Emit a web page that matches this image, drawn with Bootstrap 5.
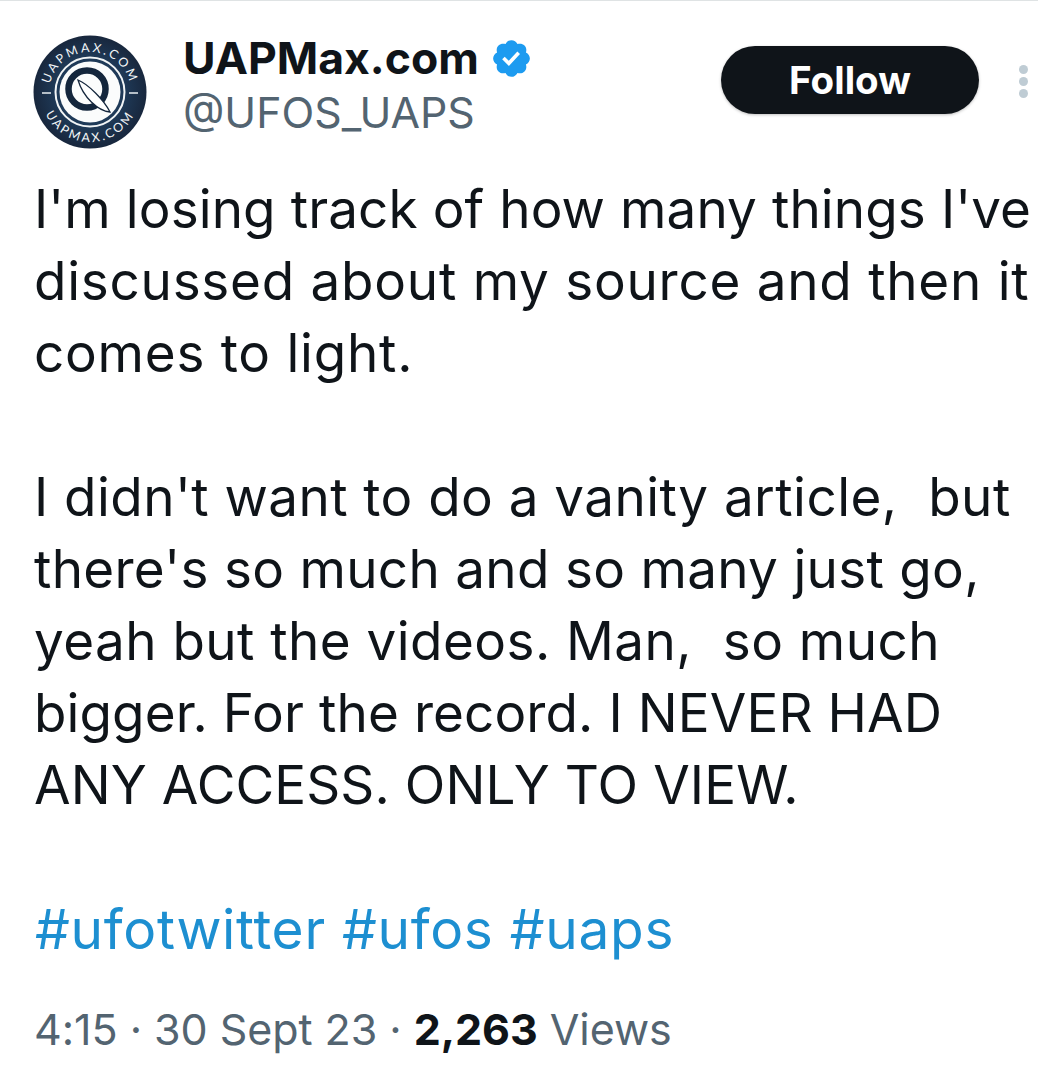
<!DOCTYPE html>
<html lang="en"><head><meta charset="utf-8">
<link href="https://cdn.jsdelivr.net/npm/bootstrap@5.3.0/dist/css/bootstrap.min.css" rel="stylesheet">
<style>
html,body{background:#fff;margin:0;overflow:hidden}
body{font-family:"Inter","Liberation Sans",sans-serif;color:#0f1419;height:1091px;border-top:1px solid #dfe3e4}
.tw-page{padding:0 0 0 34px;height:1090px}
.tw-head{height:137px;padding-top:33px}
.tw-avatar{width:114px;height:114px;margin-left:-1px;margin-right:36px;margin-top:1px;flex:none}
.tw-name{font-size:44.5px;font-weight:700;line-height:48px;color:#0f1419;white-space:nowrap}
.tw-handle{font-size:42.8px;line-height:62px;color:#536471;white-space:nowrap}
.tw-follow{background:#0f1419;color:#fff;font-weight:700;font-size:38.5px;line-height:1;width:258px;height:68px;border-radius:34px;margin-left:auto;margin-top:12px;box-shadow:0 1px 3px rgba(0,0,0,.25);flex:none}
.tw-badge{width:43px;height:43px;margin-left:11px;flex:none}
.tw-dots{width:59px;flex:none;margin-top:31px;gap:3px;padding-left:40px}
.tw-dots i{display:block;width:9px;height:9px;border-radius:50%;background:#bfccd4}
.tw-text{font-size:53px;line-height:72px;margin:0;padding-top:35px;white-space:pre-wrap;color:#0f1419;letter-spacing:.1px}
.tw-wide{letter-spacing:.75px}
.tw-mid{letter-spacing:.45px}
.tw-slim{letter-spacing:.3px}
.tw-tags{font-size:55px;line-height:72px;color:#1d8fd1;margin-top:72px;letter-spacing:.7px;padding-left:1px}
.tw-meta{font-size:43px;line-height:50px;color:#536471;margin-top:39px;letter-spacing:-.05px}
.tw-meta b{color:#0f1419;font-weight:700}
.av-txt{font-family:"Lato",sans-serif;font-size:12.5px;font-weight:400;fill:#f2f5f7;letter-spacing:2.5px}
</style></head><body>
<div class="tw-page">
<div class="tw-head d-flex">
<svg class="tw-avatar" viewBox="0 0 114 114">
<defs>
<path id="arcTop" d="M16 58 A41 41 0 0 1 98 58"/>
<path id="arcBot" d="M8 58 A49 49 0 0 0 106 58"/>
<radialGradient id="avBg" cx="50%" cy="50%" r="50%"><stop offset="60%" stop-color="#1f3a58"/><stop offset="100%" stop-color="#18273d"/></radialGradient>
</defs>
<circle cx="57" cy="57" r="56.5" fill="url(#avBg)"/>
<circle cx="57" cy="57" r="34.5" fill="none" stroke="#f2f5f6" stroke-width="2"/>
<circle cx="57" cy="57" r="30.5" fill="#fbfcfc"/>
<path d="M9 58H18M96 58H105" stroke="#e8edf0" stroke-width="1.6"/>
<text class="av-txt"><textPath href="#arcTop" startOffset="50%" text-anchor="middle">UAPMAX.COM</textPath></text>
<text class="av-txt"><textPath href="#arcBot" startOffset="50%" text-anchor="middle">UAPMAX.COM</textPath></text>
<circle cx="54" cy="54" r="18.5" fill="none" stroke="#14263c" stroke-width="6.5"/>
<path d="M45 45C55 49 71 65 77 77C65 76 50 62 45 45Z" fill="#fff" stroke="#14263c" stroke-width="1.3"/>
</svg>
<div>
<div class="tw-name d-flex align-items-center">UAPMax.com<svg class="tw-badge" viewBox="0 0 24 24"><path fill="#1d9bf0" d="M22.25 12c0-1.43-.88-2.67-2.19-3.34.46-1.39.2-2.9-.81-3.91s-2.52-1.27-3.91-.81c-.66-1.31-1.91-2.19-3.34-2.19s-2.67.88-3.33 2.19c-1.4-.46-2.91-.2-3.92.81s-1.26 2.52-.8 3.91c-1.31.67-2.2 1.91-2.2 3.34s.89 2.67 2.2 3.34c-.46 1.39-.21 2.9.8 3.91s2.52 1.26 3.91.81c.67 1.31 1.91 2.19 3.34 2.19s2.68-.88 3.34-2.19c1.39.45 2.9.2 3.91-.81s1.27-2.52.81-3.91c1.31-.67 2.19-1.91 2.19-3.34zm-11.71 4.2L6.8 12.46l1.41-1.42 2.26 2.26 4.8-5.23 1.47 1.36-6.2 6.77z"/></svg></div>
<div class="tw-handle">@UFOS_UAPS</div>
</div>
<div class="tw-follow d-flex align-items-center justify-content-center">Follow</div>
<div class="tw-dots d-flex flex-column"><i></i><i></i><i></i></div>
</div>
<p class="tw-text">I'm losing track of how many things I've
<span class="tw-wide">discussed about my source and then it</span>
<span class="tw-wide">comes to light.</span>

<span class="tw-mid">I didn't want to do a vanity article,  but</span>
<span class="tw-slim">there's so much and so many just go,</span>
<span class="tw-mid">yeah but the videos. Man,  so much</span>
bigger. For the record. I NEVER HAD
ANY ACCESS. ONLY TO VIEW.</p>
<div class="tw-tags">#ufotwitter #ufos #uaps</div>
<div class="tw-meta">4:15 · 30 Sept 23 · <b>2,263</b> Views</div>
</div>
<script src="https://cdn.jsdelivr.net/npm/bootstrap@5.3.0/dist/js/bootstrap.bundle.min.js"></script>
</body></html>
